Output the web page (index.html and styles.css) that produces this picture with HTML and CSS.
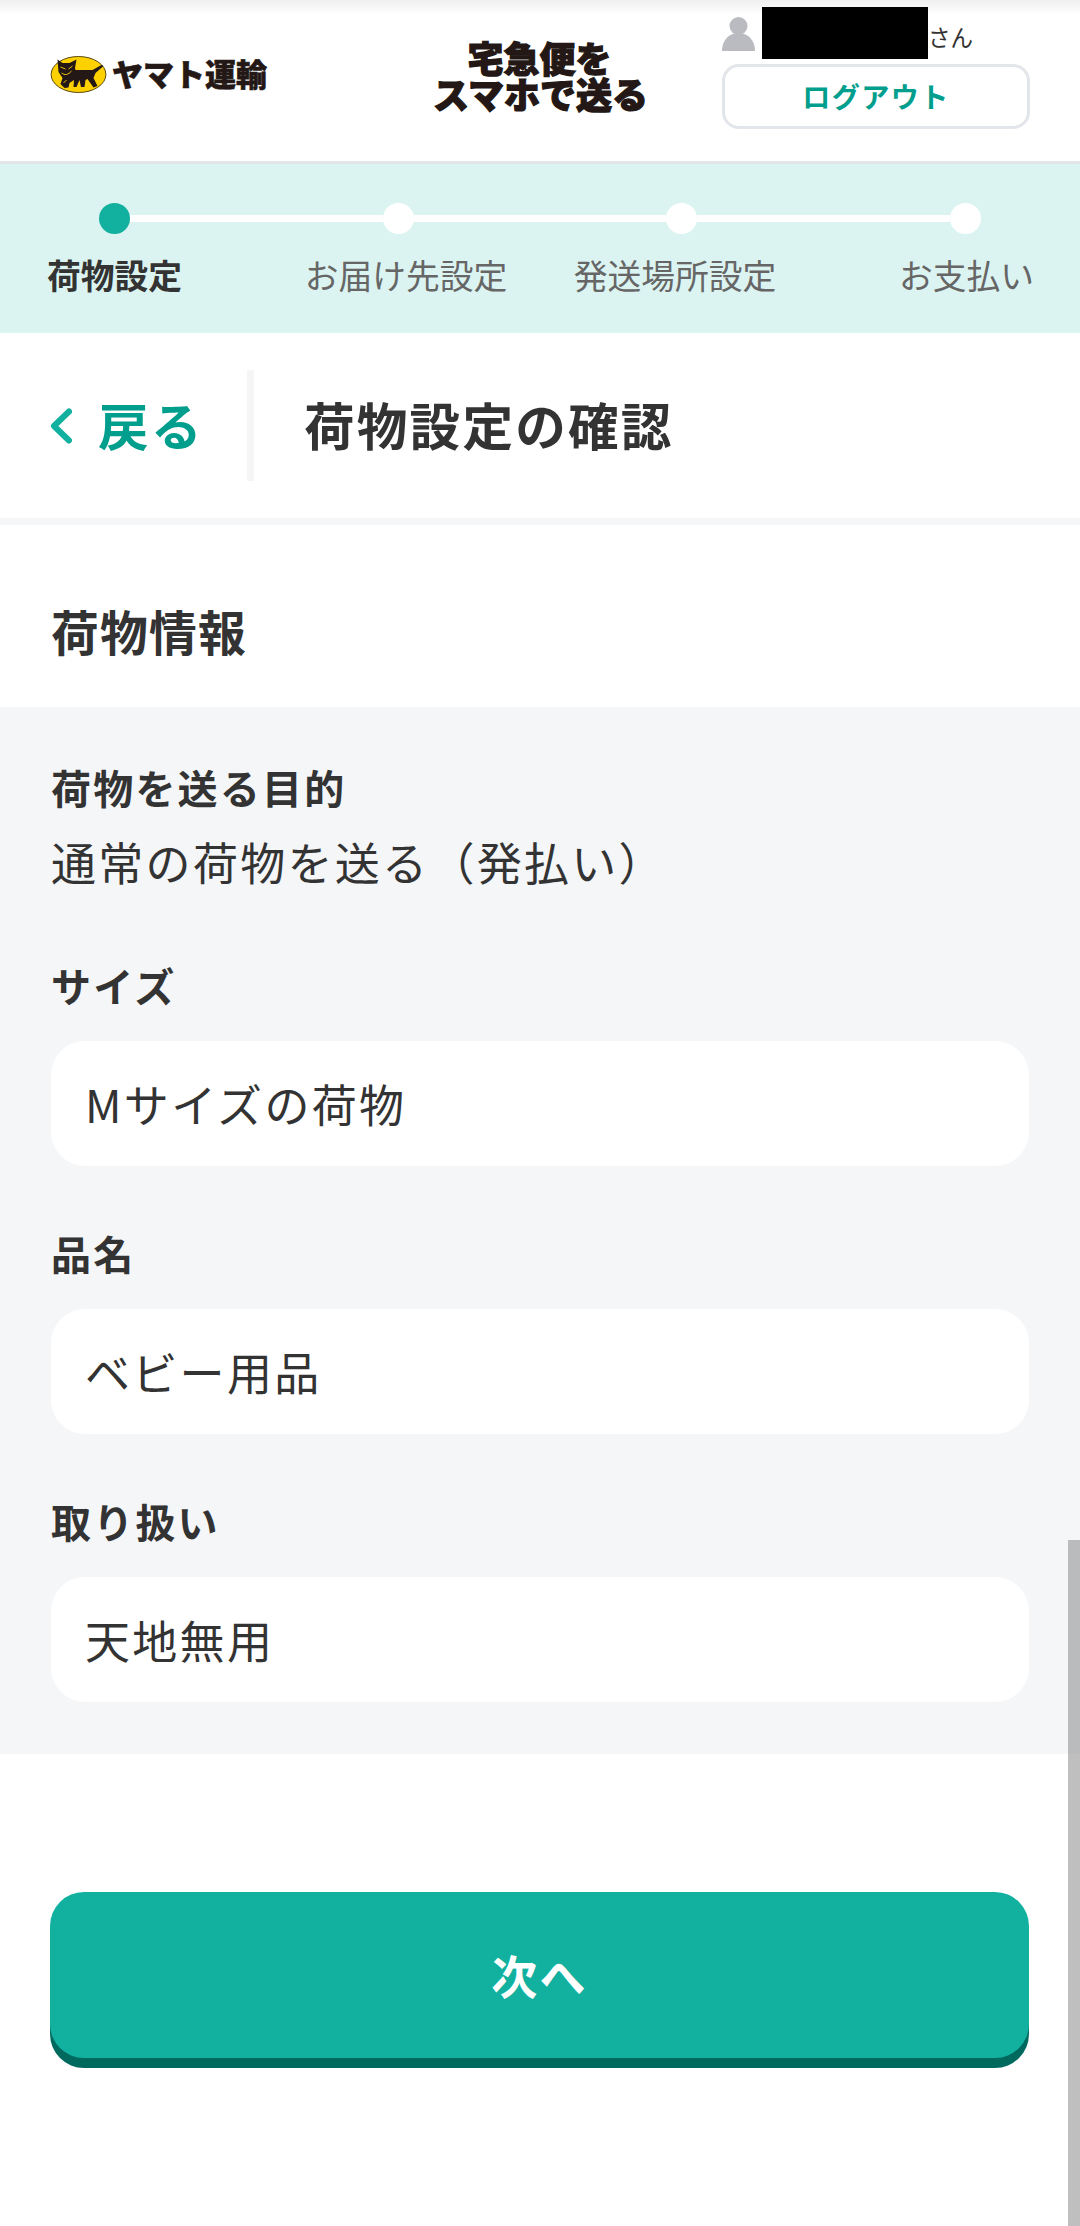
FILE: index.html
```html
<!DOCTYPE html>
<html lang="ja">
<head>
  <meta charset="UTF-8">
  <title>荷物設定の確認</title>
  <link rel="stylesheet" href="styles.css">
</head>
<body>

<header class="header">
  <div class="logo">
    <svg class="logo-mark" viewBox="0 0 56 37">
      <ellipse cx="28" cy="18.5" rx="27.4" ry="18" fill="#fdd000" stroke="#5a4812" stroke-width="1"/>
      <path fill="#231815" d="M7 3.5 L12 7 L19 7 L26 3.5 L24.5 12 L25 14 L42 14 L51 9 L53 10 L45 17 L43 22 L47 30 L43 31.5 L37 23 L35 24 L34 31 L30.5 31 L29 24 L26 31 L23 31 L23.500 24 L19 27 L18 31.5 L14 32 L10 28 L12 22 L8 16 Z"/>
      <path fill="none" stroke="#fdd000" stroke-width="0.9" d="M10 11 L15 13 M18 13 L22 10 M11 17 Q16 21 21 15 M13 27 L16 24"/>
    </svg>
    <span class="logo-name">ヤマト運輸</span>
  </div>
  <h1 class="service">宅急便を<br>スマホで送る</h1>
  <div class="account">
    <div class="user">
      <svg class="user-icon" viewBox="0 0 33 34">
        <circle cx="16.5" cy="9" r="9"/>
        <path d="M0 34 C0 25 5 18.5 12 16.5 L21 16.5 C28 18.5 33 25 33 34 Z"/>
      </svg>
      <span class="user-name"></span>
      <span class="user-suffix">さん</span>
    </div>
    <button class="logout">ログアウト</button>
  </div>
</header>

<nav class="steps">
  <div class="track">
    <i class="dot active"></i><i class="line"></i>
    <i class="dot"></i><i class="line"></i>
    <i class="dot"></i><i class="line"></i>
    <i class="dot"></i>
  </div>
  <div class="step-names">
    <span class="step-name current">荷物設定</span>
    <span class="step-name">お届け先設定</span>
    <span class="step-name">発送場所設定</span>
    <span class="step-name">お支払い</span>
  </div>
</nav>

<div class="title-bar">
  <a class="back" href="#">
    <svg class="back-icon" viewBox="0 0 22 36"><path d="M19 3.500 L4 18 L19 32.500"/></svg>
    <span>戻る</span>
  </a>
  <h2 class="page-title">荷物設定の確認</h2>
</div>

<main>
  <h3 class="section-title">荷物情報</h3>
  <div class="panel">
    <div class="label">荷物を送る目的</div>
    <div class="plain">通常の荷物を送る（発払い）</div>
    <div class="label">サイズ</div>
    <div class="field">Mサイズの荷物</div>
    <div class="label">品名</div>
    <div class="field">ベビー用品</div>
    <div class="label">取り扱い</div>
    <div class="field">天地無用</div>
  </div>
  <button class="next">次へ</button>
</main>

<div class="scrollbar"></div>

</body>
</html>
```

FILE: styles.css
```css
* { box-sizing: border-box; }
body {
  margin: 0;
  height: 2226px;
  overflow: hidden;
  background: #fff;
  color: #333;
  font-family: "Noto Sans CJK JP", sans-serif;
}
h1, h2, h3 { margin: 0; }
button { font-family: inherit; cursor: pointer; }

.header {
  display: flex;
  height: 164px;
  padding: 0 51px 0 50px;
  border-bottom: 3px solid #e2e5ea;
  background: linear-gradient(#efefef, #fff 14px);
}
.logo {
  display: flex;
  align-items: flex-start;
  width: 383px;
  padding-top: 56px;
}
.logo-mark { width: 57px; height: 37px; }
.logo-name {
  margin: 1px 0 0 5px;
  color: #231815;
  font-size: 31px;
  font-weight: 900;
  line-height: 32px;
  -webkit-text-stroke: 0.6px #231815;
}
.service {
  width: 213px;
  padding-top: 39px;
  color: #231815;
  font-size: 36px;
  font-weight: 900;
  line-height: 36px;
  text-align: center;
  white-space: nowrap;
  -webkit-text-stroke: 1.2px #231815;
}
.account { width: 307px; margin-left: auto; }
.user {
  display: flex;
  height: 64px;
  padding-top: 7px;
}
.user-icon {
  width: 33px;
  height: 34px;
  margin: 10px 7px 0 0;
  fill: #b9bbc1;
}
.user-name {
  width: 166px;
  height: 52px;
  background: #000;
}
.user-suffix {
  margin-top: 12px;
  font-size: 22.5px;
  line-height: 34px;
}
.logout {
  display: block;
  width: 308px;
  height: 65px;
  padding: 0 0 2px;
  border: 3px solid #e2e5ea;
  border-radius: 17px;
  background: #fff;
  color: #009e8c;
  font-size: 28.1px;
  font-weight: 700;
  letter-spacing: 1.4px;
}

.steps {
  height: 169px;
  padding-top: 39px;
  background: #dcf4f1;
}
.track {
  display: flex;
  align-items: center;
  padding: 0 99px;
}
.dot {
  width: 31px;
  height: 31px;
  border-radius: 50%;
  background: #fff;
}
.dot.active { background: #12b09f; }
.line {
  flex: 1;
  height: 7px;
  background: #fff;
}
.step-names {
  display: flex;
  justify-content: space-between;
  padding: 16px 46px 0 47px;
}
.step-name {
  color: #666;
  font-size: 33.75px;
  line-height: 50px;
}
.step-name.current { color: #333; font-weight: 700; }
.step-name:nth-child(2) { margin-left: 18px; }
.step-name:nth-child(3) { margin-left: -38px; margin-right: 18px; }

.title-bar {
  display: flex;
  align-items: center;
  height: 192px;
  padding: 0 50px;
  border-bottom: 7px solid #f5f6f8;
}
.back {
  display: flex;
  align-items: center;
  width: 204px;
  height: 111px;
  border-right: 7px solid #f5f5f5;
  color: #009e8c;
  font-size: 50.6px;
  font-weight: 700;
  letter-spacing: 2.5px;
  text-decoration: none;
}
.back span { padding-bottom: 4px; }
.back-icon {
  width: 22px;
  height: 36px;
  margin-right: 26px;
  fill: none;
  stroke: #12b09f;
  stroke-width: 6;
  stroke-linecap: round;
  stroke-linejoin: round;
}
.page-title {
  margin-left: 50px;
  padding-bottom: 4px;
  font-size: 50.6px;
  letter-spacing: 2.2px;
}

.section-title {
  height: 182px;
  padding: 71px 51px 0;
  font-size: 47.8px;
  line-height: 70px;
  letter-spacing: 1.2px;
}
.panel {
  height: 1047px;
  padding: 52px 51px 0;
  background: #f5f6f8;
}
.label {
  height: 56px;
  font-size: 40px;
  font-weight: 700;
  line-height: 56px;
  letter-spacing: 2.2px;
}
.plain {
  height: 142px;
  padding-top: 13px;
  font-size: 45px;
  line-height: 68px;
  letter-spacing: 2.3px;
}
.field {
  height: 125px;
  margin: 28px 0 59px;
  padding: 0 34px;
  border-radius: 34px;
  background: #fff;
  font-size: 45px;
  line-height: 125px;
  letter-spacing: 2.3px;
}
.next {
  display: block;
  width: 979px;
  height: 166px;
  margin: 138px 0 0 50px;
  padding: 0 0 3px;
  border: none;
  border-radius: 34px;
  background: #12b09f;
  box-shadow: 0 10px 0 #00695e;
  color: #fff;
  font-size: 46px;
  font-weight: 700;
  letter-spacing: 2.3px;
}

/* scroll thumb sits over the page */
.scrollbar {
  position: absolute;
  top: 1540px;
  right: 0;
  width: 12px;
  height: 686px;
  background: rgba(128, 128, 128, 0.5);
}
```
